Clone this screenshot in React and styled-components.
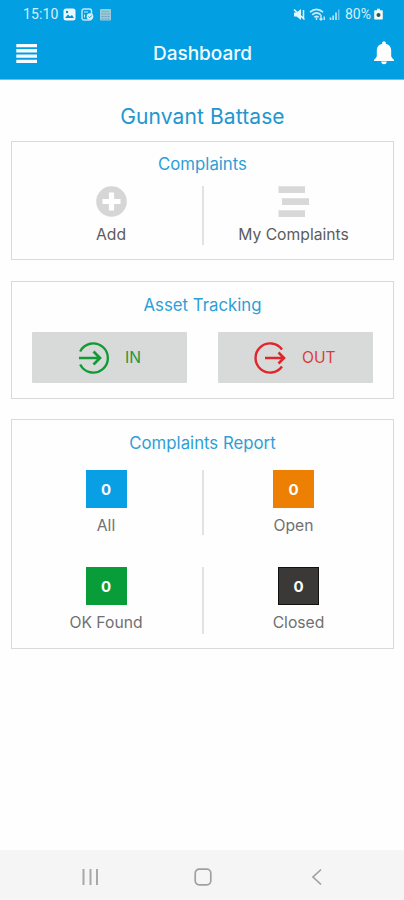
import React from "react";
import styled, { createGlobalStyle } from "styled-components";

const GlobalStyle = createGlobalStyle`
  *, *::before, *::after { box-sizing: border-box; }
  body { margin: 0; background: #fefefe; font-family: Inter, "Liberation Sans", sans-serif; }
  svg { display: block; flex: none; }
`;

const Screen = styled.div`
  width: 404px;
  height: 900px;
  display: flex;
  flex-direction: column;
  background: #fefefe;
`;

const Header = styled.header`
  height: 80px;
  flex: none;
  background: #029fe3;
  border-bottom: 1px solid #62c3ee;
  color: #f4fbff;
`;

const StatusBar = styled.div`
  height: 28px;
  padding: 0 21px 0 23px;
  display: flex;
  align-items: center;
  justify-content: space-between;
  font-family: Roboto, sans-serif;
  font-size: 14px;
  line-height: 28px;
  color: #d5f0fc;
`;

const StatusGroup = styled.div`
  display: flex;
  align-items: center;
  gap: ${(p) => p.$gap}px;
`;

const StatusText = styled.span`
  letter-spacing: ${(p) => p.$tracking || 0}px;
`;

const TitleBar = styled.div`
  height: 51px;
  padding: 0 9px 0 16px;
  display: grid;
  grid-template-columns: 22px 1fr 22px;
  align-items: center;
`;

const Title = styled.h1`
  margin: 0;
  padding-right: 6px;
  text-align: center;
  font-size: 19px;
  font-weight: 500;
  line-height: 24px;
`;

const Main = styled.main`
  flex: 1;
  padding: 23px 10px 0 11px;
`;

const UserName = styled.h2`
  margin: 0 0 11px;
  text-align: center;
  font-size: 21px;
  font-weight: 400;
  line-height: 27px;
  letter-spacing: 0.1px;
  color: #2196d0;
`;

const Card = styled.section`
  height: ${(p) => p.$height}px;
  margin-bottom: ${(p) => p.$gap || 0}px;
  border: 1.5px solid #dadada;
  background: #fefefe;
`;

const CardTitle = styled.h3`
  margin: 0;
  padding-top: ${(p) => p.$top}px;
  text-align: center;
  font-size: 16.8px;
  font-weight: 400;
  line-height: 22px;
  color: #2e9fd6;
`;

const SplitRow = styled.div`
  display: grid;
  grid-template-columns: ${(p) => 190 - p.$left}px 2px 1fr;
  margin-top: ${(p) => p.$top}px;
  padding: 0 ${(p) => p.$right}px 0 ${(p) => p.$left}px;
`;

const Divider = styled.div`
  height: ${(p) => p.$height}px;
  background: #e2e2e2;
`;

const Cell = styled.div`
  display: flex;
  flex-direction: column;
  align-items: center;
  padding-right: ${(p) => p.$nudge || 0}px;
`;

const Label = styled.span`
  margin-top: 8px;
  font-size: 15.7px;
  line-height: 20px;
  color: ${(p) => p.$color || "#5c5c5c"};
`;

const Buttons = styled.div`
  display: flex;
  gap: 31px;
  margin-top: 16px;
  padding-left: 20px;
`;

const TrackButton = styled.button`
  width: 155px;
  height: 51px;
  padding: 0 0 0 ${(p) => p.$inset}px;
  display: flex;
  align-items: center;
  gap: ${(p) => p.$gap}px;
  border: 0;
  border-radius: 1px;
  background: #d8dad9;
  color: ${(p) => p.$color};
  font: 400 15.6px/20px Inter, sans-serif;
`;

const Count = styled.div`
  width: 41px;
  height: 38px;
  padding-top: 2px;
  display: grid;
  place-items: center;
  background: ${(p) => p.$fill};
  border: 1px solid ${(p) => p.$edge || p.$fill};
  color: #fff;
  font: 700 15px/20px Inter, sans-serif;
`;

const NavBar = styled.nav`
  height: 50px;
  flex: none;
  padding: 3px 81px 0 81px;
  display: grid;
  grid-template-columns: 113px 1fr 12px;
  align-items: center;
  background: #f5f5f5;
`;

const PhotoIcon = () => (
  <svg width="13" height="13" viewBox="0 0 13 13">
    <rect x=".5" y=".5" width="12" height="12" rx="2.5" fill="#eaf8ff" />
    <path d="M2 10 5 6.5 7 8.5 9 7l2 3z" fill="#0b8dcb" />
    <circle cx="4" cy="4" r="1.2" fill="#0b8dcb" />
  </svg>
);

const DocIcon = () => (
  <svg width="13" height="13" viewBox="0 0 13 13" fill="none" stroke="#c2e9fa">
    <rect x="1" y="1" width="9.5" height="11" rx="2" strokeWidth="1.4" />
    <path d="M3 4h4M3.5 6.5v3" />
    <circle cx="9" cy="8.5" r="3.3" fill="#d6f1fc" stroke="none" />
    <path d="m7.5 8.5 1.2 1.2 2-2.2" stroke="#1596d2" />
  </svg>
);

const CalcIcon = () => (
  <svg width="13" height="13" viewBox="0 0 13 13">
    <rect x="1" y="1" width="11" height="11.5" rx="1" fill="#9fc9d9" />
    <path d="M2.5 3.5h8" stroke="#75c9a0" strokeWidth="1.5" />
    <path d="M2.5 6h8M2.5 8.5h8M2.5 11h8" stroke="#5e9fc0" strokeDasharray="2 1" />
  </svg>
);

const MuteIcon = () => (
  <svg width="13" height="13" viewBox="0 0 13 13">
    <path d="M1 4.5h2.5L8 1v11L3.5 8.5H1z" fill="#e4f6fe" />
    <path d="M1 1.5 11.5 11.5M10.5 2v9" stroke="#e4f6fe" strokeWidth="1.5" fill="none" />
  </svg>
);

const WifiIcon = () => (
  <svg width="17" height="13" viewBox="0 0 17 13" fill="none" stroke="#c9ecfb" strokeWidth="1.8">
    <path d="M1 4.2c4-3.6 9-3.6 13 0M3.2 6.8c2.7-2.4 6-2.4 8.6 0M5.4 9.3c1.3-1.1 2.9-1.1 4.2 0" />
    <path d="M7.5 9.5v2.5M12 7v5M10.5 10.5 12 12l1.5-1.5M15.2 12V8.5" strokeWidth="1.4" />
  </svg>
);

const SignalIcon = () => (
  <svg width="13" height="12" viewBox="0 0 13 12">
    <path d="M1.5 9.5V12M4.2 7.5V12M7 4.5V12" stroke="#b5e3f7" strokeWidth="1.7" />
    <path d="M9.7 1.5V12" stroke="#6dc7ed" strokeWidth="1.5" />
  </svg>
);

const BatteryIcon = () => (
  <svg width="9" height="12" viewBox="0 0 9 12">
    <path d="M3 .8h3v1.4h2c.5 0 .8.3.8.8v7.800c0 .5-.3.8-.8.8H1c-.5 0-.8-.3-.8-.8V3c0-.5.3-.8.8-.8h2z" fill="#f1faf6" />
    <circle cx="4.5" cy="6.9" r="2" fill="#34535d" />
  </svg>
);

const MenuIcon = () => (
  <svg width="22" height="20" viewBox="0 0 22 20">
    <path d="M.3 1.5h20.7M.3 6.8h20.7M.3 12.1h20.7M.3 17.4h20.7" stroke="#f6fcff" strokeWidth="3.4" />
  </svg>
);

const BellIcon = () => (
  <svg width="22" height="25" viewBox="0 0 22 25" fill="#fdffff">
    <path d="M11 .3c1 0 1.8.7 1.8 1.7v.7c3.3.7 5.4 3.4 5.4 6.6v5.5c0 1.5 1.2 2.6 2.8 4.1v1H1v-1c1.6-1.5 2.800-2.600 2.800-4.100V9.300c0-3.200 2.100-5.900 5.400-6.600V2C9.200 1 10 .3 11 .3z" />
    <path d="M8.200 20.500h5.600c0 1.700-1.200 2.700-2.800 2.700s-2.800-1-2.800-2.700z" />
  </svg>
);

const AddIcon = () => (
  <svg width="31" height="31" viewBox="0 0 31 31">
    <circle cx="15.5" cy="15.5" r="15.3" fill="#d6d6d6" />
    <path d="M15.5 6.500v18M6.500 15.500h18" stroke="#fff" strokeWidth="5.200" />
  </svg>
);

const ListIcon = () => (
  <svg width="31" height="31" viewBox="0 0 31 31" fill="#d8d8d8">
    <path d="M.5 .3H27V7H.5zM4 12.200h27v6.700H4zM.5 24.200H27v6.700H.5z" />
  </svg>
);

const InIcon = () => (
  <svg width="32" height="32" viewBox="0 0 32 32" fill="none" stroke="#129b35" strokeWidth="2.4">
    <path d="M2.200 9.500a14.600 14.600 0 1 1 0 13" />
    <path d="M1 16h20.500M15.500 9.500l6.500 6.500-6.500 6.500" strokeWidth="2.700" />
  </svg>
);

const OutIcon = () => (
  <svg width="32" height="32" viewBox="0 0 32 32" fill="none" stroke="#e0262a" strokeWidth="2.4">
    <path d="M28 7.500a14.600 14.600 0 1 0 0 17" />
    <path d="M11 16h19M24.500 10.500l5.500 5.500-5.500 5.500" strokeWidth="2.600" />
  </svg>
);

const RecentsIcon = () => (
  <svg width="18" height="18" viewBox="0 0 18 18" stroke="#a8a8a8" strokeWidth="2">
    <path d="M2.500 1v16M9.500 1v16M16 1v16" />
  </svg>
);

const HomeIcon = () => (
  <svg width="18" height="18" viewBox="0 0 18 18">
    <rect x="1.200" y="1.200" width="15.600" height="15.600" rx="4" fill="none" stroke="#a0a0a0" strokeWidth="1.700" />
  </svg>
);

const BackIcon = () => (
  <svg width="12" height="18" viewBox="0 0 12 18">
    <path d="M10 1.500 2 9l8 7.500" fill="none" stroke="#a0a0a0" strokeWidth="1.700" />
  </svg>
);

const Stat = ({ fill, edge, label, nudge }) => (
  <Cell $nudge={nudge}>
    <Count $fill={fill} $edge={edge}>0</Count>
    <Label $color="#707070">{label}</Label>
  </Cell>
);

export default function App() {
  return (
    <Screen>
      <GlobalStyle />
      <Header>
        <StatusBar>
          <StatusGroup $gap={5}>
            <StatusText $tracking={0.1}>15:10</StatusText>
            <PhotoIcon />
            <DocIcon />
            <CalcIcon />
          </StatusGroup>
          <StatusGroup $gap={3}>
            <MuteIcon />
            <WifiIcon />
            <SignalIcon />
            <StatusText>80%</StatusText>
            <BatteryIcon />
          </StatusGroup>
        </StatusBar>
        <TitleBar>
          <MenuIcon />
          <Title>Dashboard</Title>
          <BellIcon />
        </TitleBar>
      </Header>
      <Main>
        <UserName>Gunvant Battase</UserName>
        <Card $height={119} $gap={21}>
          <CardTitle $top={11}>Complaints</CardTitle>
          <SplitRow $top={11} $left={8} $right={10}>
            <Cell>
              <AddIcon />
              <Label>Add</Label>
            </Cell>
            <Divider $height={59} />
            <Cell>
              <ListIcon />
              <Label>My Complaints</Label>
            </Cell>
          </SplitRow>
        </Card>
        <Card $height={118} $gap={20}>
          <CardTitle $top={12}>Asset Tracking</CardTitle>
          <Buttons>
            <TrackButton $color="#25953f" $inset={46} $gap={15}>
              <InIcon />
              IN
            </TrackButton>
            <TrackButton $color="#dc3a3c" $inset={36} $gap={16}>
              <OutIcon />
              OUT
            </TrackButton>
          </Buttons>
        </Card>
        <Card $height={230}>
          <CardTitle $top={12}>Complaints Report</CardTitle>
          <SplitRow $top={16} $left={0} $right={10}>
            <Stat fill="#089fe4" label="All" nudge={2} />
            <Divider $height={65} />
            <Stat fill="#ed8003" label="Open" />
          </SplitRow>
          <SplitRow $top={31} $left={0} $right={0}>
            <Stat fill="#089d38" label="OK Found" nudge={2} />
            <Divider $height={67} />
            <Stat fill="#3b3938" edge="#111" label="Closed" />
          </SplitRow>
        </Card>
      </Main>
      <NavBar>
        <RecentsIcon />
        <HomeIcon />
        <BackIcon />
      </NavBar>
    </Screen>
  );
}
